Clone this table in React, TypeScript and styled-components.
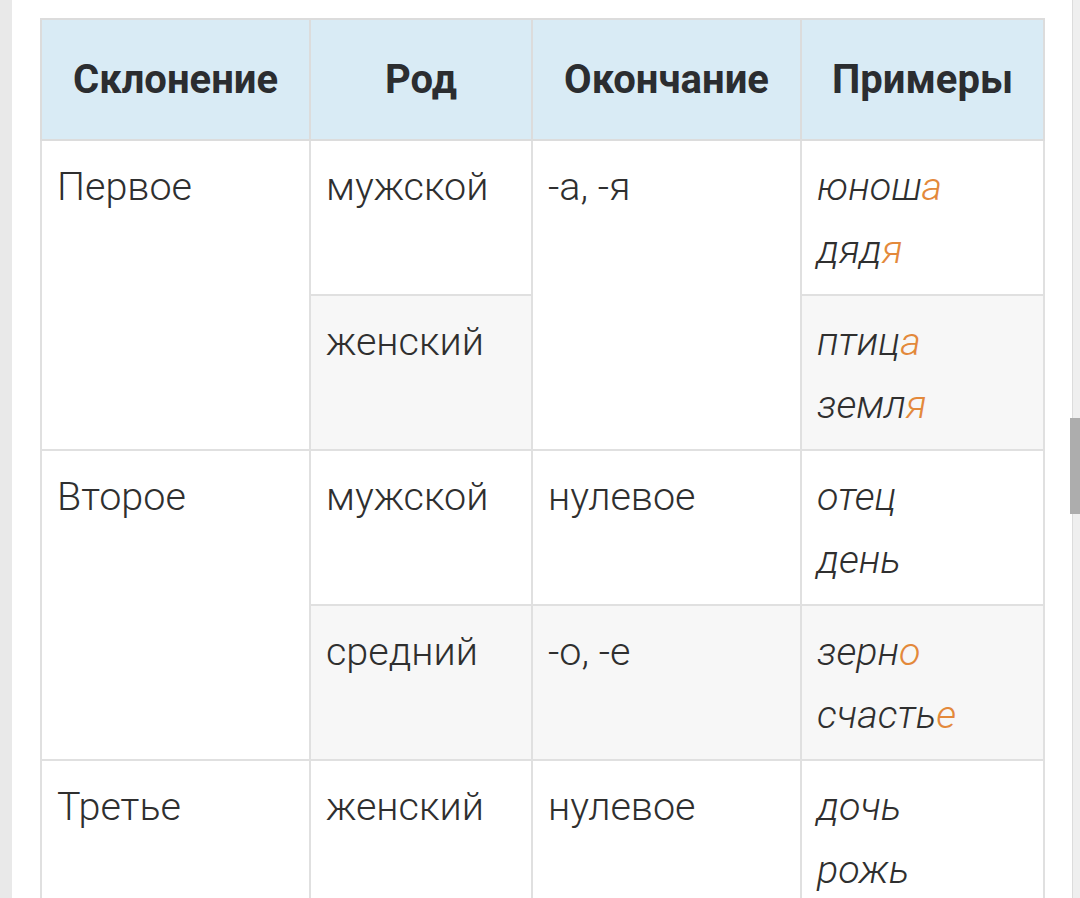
import React from "react";
import styled, { createGlobalStyle } from "styled-components";

const Global = createGlobalStyle`
  html, body { margin: 0; padding: 0; }
  body {
    background: #e9e9e9;
    font-family: Roboto, "Noto Sans", "Liberation Sans", sans-serif;
    overflow: hidden;
  }
`;

const Page = styled.div`
  display: flex;
  height: 898px;
  overflow: hidden;
`;

const LeftStrip = styled.div`
  width: 12px;
  flex-shrink: 0;
  background: #e9e9e9;
`;

const Content = styled.main`
  flex: 1;
  background: #ffffff;
  padding: 18px 0 0 28px;
  overflow: hidden;
`;

const Gutter = styled.div`
  position: relative;
  width: 7px;
  flex-shrink: 0;
  background: #efefef;
  border-left: 1px solid #dcdcdc;
`;

const Thumb = styled.div`
  position: absolute;
  top: 418px;
  right: 0;
  width: 10px;
  height: 96px;
  background: #adadad;
`;

const Table = styled.table`
  width: 1003px;
  table-layout: fixed;
  border-collapse: collapse;
  border: 2px solid #dfdfdf;
`;

const HeadCell = styled.th`
  background: #d9ebf5;
  color: #2b2d30;
  font-weight: 700;
  font-size: 40px;
  line-height: 63px;
  padding: 28px 15px;
  text-align: center;
  border: 2px solid #dcdcdc;
`;

const Row = styled.tr<{ $alt?: boolean }>`
  background: ${(p) => (p.$alt ? "#f7f7f7" : "#ffffff")};
`;

const Cell = styled.td<{ $italic?: boolean }>`
  font-size: 39.5px;
  line-height: 63px;
  font-weight: 300;
  font-style: ${(p) => (p.$italic ? "italic" : "normal")};
  color: #2f2f2f;
  padding: 14px 15px 13px 15px;
  vertical-align: top;
  text-align: left;
  border: 2px solid #e0e0e0;
`;

const Line = styled.div`
  white-space: nowrap;
`;

const End = styled.span`
  color: #e3893b;
`;

type Word = [string, string];

const Examples: React.FC<{ words: Word[] }> = ({ words }) => (
  <Cell $italic>
    {words.map(([stem, end], i) => (
      <Line key={i}>
        {stem}
        {end && <End>{end}</End>}
      </Line>
    ))}
  </Cell>
);

export default function App() {
  return (
    <>
      <Global />
      <Page>
        <LeftStrip />
        <Content>
          <Table>
            <colgroup>
              <col style={{ width: 269 }} />
              <col style={{ width: 222 }} />
              <col style={{ width: 269 }} />
              <col style={{ width: 243 }} />
            </colgroup>
            <thead>
              <tr>
                <HeadCell>Склонение</HeadCell>
                <HeadCell>Род</HeadCell>
                <HeadCell>Окончание</HeadCell>
                <HeadCell>Примеры</HeadCell>
              </tr>
            </thead>
            <tbody>
              <Row>
                <Cell rowSpan={2}>Первое</Cell>
                <Cell>мужской</Cell>
                <Cell rowSpan={2}>-а, -я</Cell>
                <Examples words={[["юнош", "а"], ["дяд", "я"]]} />
              </Row>
              <Row $alt>
                <Cell>женский</Cell>
                <Examples words={[["птиц", "а"], ["земл", "я"]]} />
              </Row>
              <Row>
                <Cell rowSpan={2}>Второе</Cell>
                <Cell>мужской</Cell>
                <Cell>нулевое</Cell>
                <Examples words={[["отец", ""], ["день", ""]]} />
              </Row>
              <Row $alt>
                <Cell>средний</Cell>
                <Cell>-о, -е</Cell>
                <Examples words={[["зерн", "о"], ["счасть", "е"]]} />
              </Row>
              <Row>
                <Cell>Третье</Cell>
                <Cell>женский</Cell>
                <Cell>нулевое</Cell>
                <Examples words={[["дочь", ""], ["рожь", ""]]} />
              </Row>
            </tbody>
          </Table>
        </Content>
        <Gutter>
          <Thumb />
        </Gutter>
      </Page>
    </>
  );
}
